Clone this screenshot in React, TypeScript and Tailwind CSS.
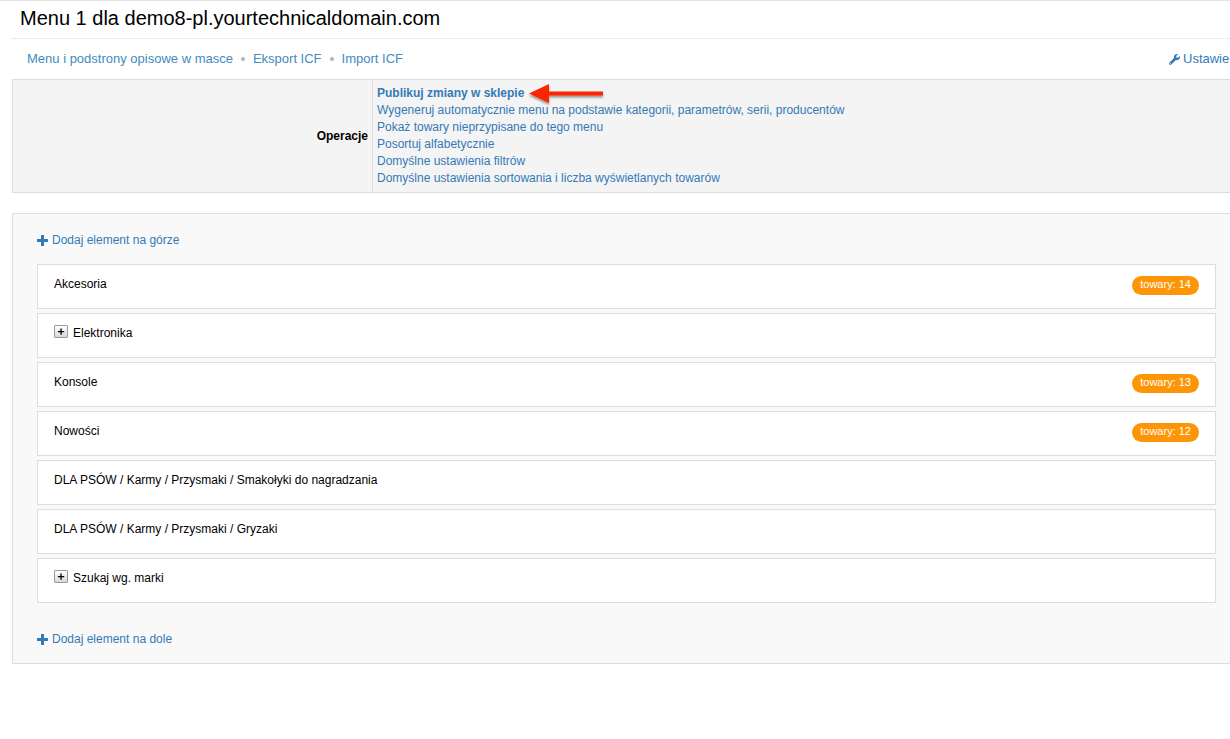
import { FaWrench } from "react-icons/fa";

type Item = { name: string; count?: number; expandable?: boolean };

const items: Item[] = [
  { name: "Akcesoria", count: 14 },
  { name: "Elektronika", expandable: true },
  { name: "Konsole", count: 13 },
  { name: "Nowości", count: 12 },
  { name: "DLA PSÓW / Karmy / Przysmaki / Smakołyki do nagradzania" },
  { name: "DLA PSÓW / Karmy / Przysmaki / Gryzaki" },
  { name: "Szukaj wg. marki", expandable: true },
];

const operations = [
  "Wygeneruj automatycznie menu na podstawie kategorii, parametrów, serii, producentów",
  "Pokaż towary nieprzypisane do tego menu",
  "Posortuj alfabetycznie",
  "Domyślne ustawienia filtrów",
  "Domyślne ustawienia sortowania i liczba wyświetlanych towarów",
];

const pages = ["Menu i podstrony opisowe w masce", "Eksport ICF", "Import ICF"];

function Arrow() {
  return (
    <svg width="78" height="26" viewBox="0 0 78 26" className="-my-1 ml-1 shrink-0" aria-hidden="true">
      <defs>
        <filter id="arrow-shadow" x="-10%" y="-20%" width="120%" height="160%">
          <feDropShadow dx="0" dy="2" stdDeviation="1.2" floodColor="#000" floodOpacity="0.4" />
        </filter>
      </defs>
      <path d="M1 12.5 L21 3 V10.5 H75 V14.5 H21 V22 Z" fill="#fb2500" filter="url(#arrow-shadow)" />
    </svg>
  );
}

function AddLink({ label }: { label: string }) {
  return (
    <a href="#" className="flex h-4 w-fit items-center gap-1 text-[#337ab7]">
      <svg width="11" height="11" viewBox="0 0 11 11" fill="currentColor" aria-hidden="true">
        <path d="M4 0h3v4h4v3H7v4H4V7H0V4h4z" />
      </svg>
      {label}
    </a>
  );
}

function Row({ item }: { item: Item }) {
  return (
    <li className="flex h-[45px] items-start border border-[#dddddd] bg-white px-4 pt-[11px]">
      {item.expandable && (
        <button
          type="button"
          aria-label={`Rozwiń ${item.name}`}
          className="mr-[5px] h-[13px] w-[14px] shrink-0 rounded-[1px] border border-[#999999] bg-linear-to-b from-white to-[#d8d8d8]"
        >
          <svg width="12" height="11" viewBox="0 0 12 11" fill="#000" aria-hidden="true">
            <path d="M5.400 2.500h1.300v2.400H9.200v1.300H6.700v2.500H5.400V6.200H2.900V4.900h2.500z" />
          </svg>
        </button>
      )}
      <span className="leading-4">{item.name}</span>
      {item.count !== undefined && (
        <span className="ml-auto h-[19px] rounded-full bg-[#fd9506] px-2 text-[11px] leading-[17px] text-white">
          towary: {item.count}
        </span>
      )}
    </li>
  );
}

export default function App() {
  return (
    <main className="overflow-hidden border-t border-[#e5e5e5] bg-white pl-3 font-['Liberation_Sans',Arial,sans-serif] text-[12px] leading-4 text-black">
      <h1 className="border-b border-dotted border-[#dddddd] pt-[5px] pb-[7px] pl-2 text-[20px] leading-[25px]">
        Menu 1 dla demo8-pl.yourtechnicaldomain.com
      </h1>
      <div className="flex h-10 items-center pl-[15px] text-[13px]">
        <nav className="flex items-center">
          {pages.map((page, i) => (
            <span key={page} className="flex items-center">
              {i > 0 && <span className="mx-2 h-1 w-1 rounded-full bg-[#b4b4bc]" />}
              <a href="#" className="text-[#428bbd]">{page}</a>
            </span>
          ))}
        </nav>
        <a href="#" className="ml-auto flex w-[61px] items-center gap-[3px] overflow-hidden whitespace-nowrap text-[#337ab7]">
          <FaWrench className="shrink-0 text-[11px]" />
          Ustawienia
        </a>
      </div>
      <table className="w-full border-collapse border-y border-l border-[#dddddd] bg-[#f4f4f4]">
        <tbody>
          <tr>
            <th scope="row" className="w-[360px] border-r border-[#dddddd] px-1 text-right align-middle font-bold">
              Operacje
            </th>
            <td className="px-1 pt-[5px] pb-[5px]">
              <ul>
                <li className="flex h-[17px] items-center leading-[17px]">
                  <a href="#" className="font-bold text-[#337ab7]">Publikuj zmiany w sklepie</a>
                  <Arrow />
                </li>
                {operations.map((label) => (
                  <li key={label} className="leading-[17px]">
                    <a href="#" className="text-[#337ab7]">{label}</a>
                  </li>
                ))}
              </ul>
            </td>
          </tr>
        </tbody>
      </table>
      <section className="mt-5 border-y border-l border-[#dddddd] bg-[#f9f9f9] pt-[18px] pr-[14px] pb-4 pl-6">
        <AddLink label="Dodaj element na górze" />
        <ul className="mt-4 mb-7 flex flex-col gap-1">
          {items.map((item) => (
            <Row key={item.name} item={item} />
          ))}
        </ul>
        <AddLink label="Dodaj element na dole" />
      </section>
    </main>
  );
}
